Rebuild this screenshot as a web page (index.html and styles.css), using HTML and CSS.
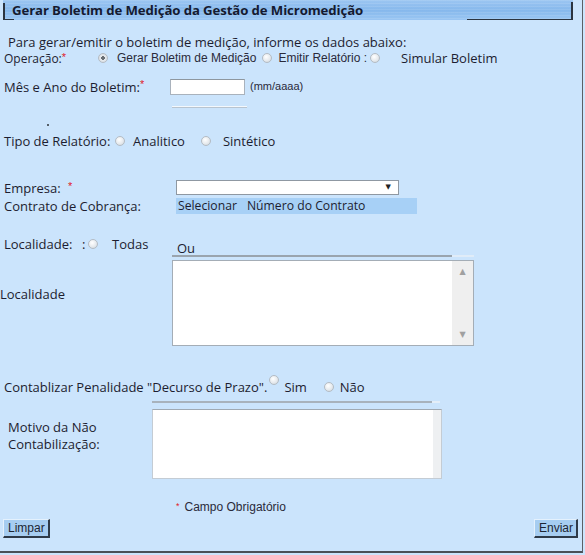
FILE: index.html
```html
<!DOCTYPE html>
<html lang="pt-BR">
<head>
<meta charset="utf-8">
<title>Gerar Boletim de Medição</title>
<link rel="stylesheet" href="styles.css">
</head>
<body>
<div class="panel">
  <div class="header"><span class="title">Gerar Boletim de Medição da Gestão de Micromedição</span></div>

  <div class="row intro">Para gerar/emitir o boletim de medição, informe os dados abaixo:</div>

  <div class="row op">
    <span class="lbl op-lbl">Operação:<span class="req">*</span></span>
    <span class="radio checked"></span>
    <span class="small op-t1">Gerar Boletim de Medição</span>
    <span class="radio op-r2"></span>
    <span class="small op-t2">Emitir Relatório :</span>
    <span class="radio op-r3"></span>
    <span class="op-t3">Simular Boletim</span>
  </div>

  <div class="row mes">
    <span class="lbl mes-lbl">Mês e Ano do Boletim:<span class="req">*</span></span>
    <span class="input mes-in"></span>
    <span class="small mes-hint">(mm/aaaa)</span>
  </div>
  <div class="row mes-line"><span class="wline"></span></div>
  <div class="row dotrow"><span class="dot"></span></div>

  <div class="row tipo">
    <span class="lbl tipo-lbl">Tipo de Relatório:</span>
    <span class="radio"></span>
    <span class="tipo-t1">Analitico</span>
    <span class="radio tipo-r2"></span>
    <span class="tipo-t2">Sintético</span>
  </div>

  <div class="row emp">
    <span class="lbl emp-lbl">Empresa:</span>
    <span class="req emp-req">*</span>
    <span class="select"><span class="arrow">▼</span></span>
  </div>

  <div class="row contr">
    <span class="lbl contr-lbl">Contrato de Cobrança:</span>
    <span class="bar"><span class="bar-t1">Selecionar</span><span class="bar-t2">Número do Contrato</span></span>
  </div>

  <div class="row loc">
    <span class="lbl loc-lbl">Localidade:</span>
    <span class="loc-colon">:</span>
    <span class="radio"></span>
    <span class="loc-todas">Todas</span>
    <span class="loc-ou">Ou</span>
  </div>
  <div class="row loc-line"><span class="gline"></span><span class="gline-light"></span></div>

  <div class="row listrow">
    <span class="lbl list-lbl">Localidade</span>
    <div class="listbox">
      <div class="list-body"></div>
      <div class="scroll">
        <span class="sarrow">▲</span>
        <span class="sarrow">▼</span>
      </div>
    </div>
  </div>

  <div class="row contab">
    <span class="lbl">Contablizar Penalidade "Decurso de Prazo".</span>
    <span class="radio raised"></span>
    <span class="contab-sim">Sim</span>
    <span class="radio contab-r2"></span>
    <span class="contab-nao">Não</span>
  </div>

  <div class="row mot-line"><span class="gline2"></span><span class="gline2-light"></span></div>
  <div class="row motivo">
    <div class="mot-lbl">Motivo da Não<br>Contabilização:</div>
    <div class="textarea"><div class="ta-body"></div><div class="ta-scroll"></div></div>
  </div>

  <div class="row campo"><span class="req">*</span><span class="small campo-t">Campo Obrigatório</span></div>

  <div class="row btns">
    <span class="btn">Limpar</span>
    <span class="btn">Enviar</span>
  </div>
</div>
</body>
</html>
```

FILE: styles.css
```css
html, body {
  margin: 0;
  padding: 0;
  background: #cbe4fc;
}
.panel {
  width: 582px;
  height: 551px;
  background: #cbe4fc;
  border-right: 1px solid #5a5f66;
  border-bottom: 2px solid #4a5058;
  display: flex;
  flex-direction: column;
  font-family: "Open Sans", "Liberation Sans", sans-serif;
  font-size: 13px;
  line-height: 16px;
  color: #1d1d30;
  box-sizing: content-box;
}
.header {
  position: relative;
  height: 20px;
  width: 570px;
  margin-left: 3px;
  background:
    repeating-linear-gradient(180deg, rgba(255,255,255,0.10) 0px, rgba(255,255,255,0.10) 1px, rgba(0,0,0,0) 1px, rgba(0,0,0,0) 3px),
    linear-gradient(180deg, #9cc6f2 0%, #86b8ec 50%, #9ac6f3 100%);
  display: flex;
  align-items: center;
}
.header::before {
  content: "";
  position: absolute;
  left: 0;
  top: 3px;
  width: 9px;
  height: 16px;
  border-left: 2px solid #2b3440;
  border-bottom: 1px solid #2b3440;
}
.header::after {
  content: "";
  position: absolute;
  right: 0;
  top: 2px;
  width: 104px;
  height: 17px;
  border-right: 2px solid #2b3440;
  border-bottom: 1px solid #2b3440;
}
.title {
  margin-left: 9px;
  font-family: "Open Sans", "Liberation Sans", sans-serif;
  font-weight: 700;
  font-size: 13.2px;
  color: #151a30;
  letter-spacing: -0.1px;
}
.row {
  display: flex;
  align-items: center;
  flex-shrink: 0;
}
.small {
  font-family: "Liberation Sans", Arial, sans-serif;
  font-size: 12px;
  color: #2a2a3a;
}
.req {
  color: #e0202a;
  font-family: "Liberation Sans", Arial, sans-serif;
  font-size: 11px;
  vertical-align: top;
  line-height: 10px;
}
.lbl { margin-left: 4px; white-space: nowrap; }
.radio {
  display: inline-block;
  width: 8px;
  height: 8px;
  border-radius: 50%;
  border: 1px solid #b4bcc4;
  background: radial-gradient(circle at 40% 35%, #ffffff 0%, #e4e8ec 60%, #c8ced4 100%);
  flex-shrink: 0;
}
.radio.checked {
  background: radial-gradient(circle, #6a6f74 0%, #6a6f74 28%, #e8ecf0 34%, #d0d6dc 100%);
}
.radio.raised { align-self: flex-start; margin-top: -4px; }

.intro { margin-top: 14px; height: 16px; line-height: 15px; padding-left: 8px; }

.op { height: 14px; line-height: 13px; margin-top: 1px; }
.op-lbl { width: 94px; font-size: 12px; }
.op-t1 { margin-left: 9px; }
.op-r2 { margin-left: 6px; }
.op-t2 { margin-left: 6px; }
.op-r3 { margin-left: 3px; }
.op-t3 { margin-left: 21px; }

.mes { margin-top: 14px; height: 16px; }
.mes-lbl { width: 166px; }
.input {
  display: inline-block;
  width: 73px;
  height: 14px;
  background: #fff;
  border: 1px solid #a9b2bc;
  border-top-color: #8e979f;
}
.mes-hint { margin-left: 5px; font-size: 11px; margin-top: -2px; }
.mes-line { margin-top: 11px; height: 2px; padding-left: 172px; }
.wline {
  width: 75px;
  height: 2px;
  background: #f4f8fc;
  border-bottom: 1px solid #b8c4d0;
  box-sizing: border-box;
}
.dotrow { margin-top: 16px; height: 2px; padding-left: 47px; }
.dot { width: 2px; height: 2px; background: #55606a; }

.tipo { margin-top: 7px; height: 16px; }
.tipo-lbl { width: 111px; }
.tipo-t1 { margin-left: 8px; }
.tipo-r2 { margin-left: 16px; }
.tipo-t2 { margin-left: 12px; }

.emp { margin-top: 31px; height: 15px; }
.emp-lbl { width: 64px; }
.emp-req { margin-top: -4px; width: 108px; }
.select {
  position: relative;
  display: inline-block;
  width: 221px;
  height: 13px;
  background: #fff;
  border: 1px solid #8f98a2;
}
.arrow {
  position: absolute;
  right: 7px;
  top: 1px;
  font-size: 7px;
  line-height: 10px;
  color: #222;
  font-family: "DejaVu Sans", sans-serif;
}

.contr { margin-top: 3px; height: 16px; }
.contr-lbl { width: 172px; }
.bar {
  display: flex;
  align-items: center;
  width: 241px;
  height: 16px;
  background: #a7d0f6;
  font-size: 12.2px;
}
.bar-t1 { margin-left: 2px; }
.bar-t2 { margin-left: 10px; }

.loc { margin-top: 22px; height: 16px; }
.loc-lbl { width: 78px; }
.loc-colon { width: 6px; }
.loc-todas { margin-left: 14px; width: 65px; }
.loc-ou { margin-top: 7px; }
.loc-line { margin-top: 3px; height: 2px; padding-left: 172px; align-items: flex-start; }
.gline { width: 280px; height: 2px; background: #9aa4ae; }
.gline-light { width: 22px; height: 2px; background: #e0ecf8; }

.listrow { margin-top: 3px; height: 86px; align-items: flex-start; }
.list-lbl { margin-left: 0; width: 172px; margin-top: 26px; }
.listbox {
  display: flex;
  width: 300px;
  height: 84px;
  border: 1px solid #a4adb6;
  background: #fff;
}
.list-body { flex: 1; }
.scroll {
  width: 21px;
  background: #efefef;
  display: flex;
  flex-direction: column;
  justify-content: space-between;
  align-items: center;
  padding: 6px 0 5px;
  box-sizing: border-box;
}
.sarrow {
  font-size: 8px;
  color: #a0a0a0;
  font-family: "DejaVu Sans", sans-serif;
  line-height: 10px;
}

.contab { margin-top: 33px; height: 16px; }
.contab .lbl { margin-right: 2px; }
.contab-sim { margin-left: 5px; }
.contab-r2 { margin-left: 17px; }
.contab-nao { margin-left: 6px; }

.mot-line { margin-top: 6px; height: 2px; padding-left: 152px; }
.gline2 { width: 280px; height: 2px; background: #a8b2bc; }
.gline2-light { width: 8px; height: 2px; background: #e4eef8; }
.motivo { margin-top: 6px; height: 70px; align-items: flex-start; }
.mot-lbl { margin-left: 8px; width: 144px; margin-top: 10px; line-height: 17px; }
.textarea {
  display: flex;
  width: 288px;
  height: 68px;
  border: 1px solid #c4ccd4;
  border-top-color: #a0a9b2;
  background: #fff;
}
.ta-body { flex: 1; }
.ta-scroll { width: 8px; background: #eef0f2; }

.campo { margin-top: 21px; height: 14px; padding-left: 176px; }
.campo .req { font-size: 9px; margin-top: -2px; }
.campo-t { margin-left: 5px; }

.btns {
  margin-top: 5px;
  height: 19px;
  justify-content: space-between;
  padding: 0 4px 0 3px;
}
.btn {
  display: inline-flex;
  align-items: center;
  justify-content: center;
  height: 16px;
  padding: 0 3px 0 4px;
  background: #a6cdf1;
  border-top: 1px solid #e4f1fd;
  border-left: 1px solid #e4f1fd;
  border-right: 2px solid #2e3a48;
  border-bottom: 2px solid #2e3a48;
  font-family: "Liberation Sans", Arial, sans-serif;
  font-size: 12px;
  color: #1d2533;
}
```
